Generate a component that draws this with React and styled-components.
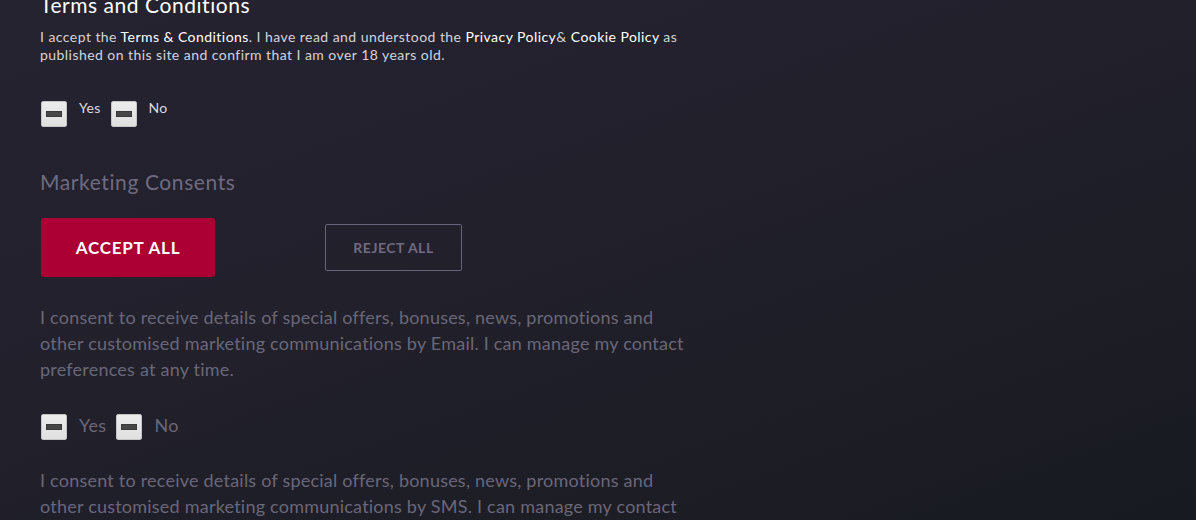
import styled, { createGlobalStyle } from 'styled-components';

const GlobalStyle = createGlobalStyle`
  html, body {
    margin: 0;
    padding: 0;
  }
  body {
    font-family: Lato, 'Open Sans', sans-serif;
    background: #201f2a;
  }
  * {
    box-sizing: border-box;
  }
`;

function CheckBox() {
  return (
    <Box>
      <Bar />
    </Box>
  );
}

function ChoiceRow({ large }) {
  return (
    <Row $large={large}>
      <CheckBox />
      <ChoiceLabel $large={large}>Yes</ChoiceLabel>
      <CheckBox />
      <ChoiceLabel $large={large}>No</ChoiceLabel>
    </Row>
  );
}

export default function App() {
  return (
    <>
      <GlobalStyle />
      <Page>
        <Form>
          <Title>Terms and Conditions</Title>
          <Legal>
            I accept the <strong>Terms &amp; Conditions</strong>. I have read and understood the{' '}
            <strong>Privacy Policy</strong>&amp; <strong>Cookie Policy</strong> as published on this
            site and confirm that I am over 18 years old.
          </Legal>
          <ChoiceRow />

          <SectionTitle>Marketing Consents</SectionTitle>
          <Buttons>
            <AcceptButton>ACCEPT ALL</AcceptButton>
            <RejectButton>REJECT ALL</RejectButton>
          </Buttons>

          <Consent>
            I consent to receive details of special offers, bonuses, news, promotions and other
            customised marketing communications by Email. I can manage my contact preferences at any
            time.
          </Consent>
          <ChoiceRow large />

          <Consent>
            I consent to receive details of special offers, bonuses, news, promotions and other
            customised marketing communications by SMS. I can manage my contact preferences at any
            time.
          </Consent>
        </Form>
      </Page>
    </>
  );
}

const Page = styled.div`
  min-height: 100vh;
  height: 520px;
  overflow: hidden;
  padding: 0 40px;
  background: linear-gradient(160deg, #252330 0%, #21202b 45%, #1d1d26 75%, #171a21 100%);
`;

const Form = styled.div`
  width: 656px;
  display: flex;
  flex-direction: column;
`;

const Title = styled.h2`
  margin: -7px 0 0;
  font-size: 21px;
  line-height: 24px;
  font-weight: 400;
  letter-spacing: 0.55px;
  color: #ffffff;
`;

const Legal = styled.p`
  margin: 11px 0 0;
  font-size: 14px;
  line-height: 18px;
  color: #d4d3da;
  letter-spacing: 0.45px;
  strong {
    font-weight: 400;
    color: #ffffff;
  }
`;

const Row = styled.div`
  display: flex;
  align-items: ${(p) => (p.$large ? 'center' : 'flex-start')};
  margin-top: ${(p) => (p.$large ? '32px' : '37px')};
  padding-left: 1px;
`;

const Box = styled.span`
  width: 26px;
  height: 26px;
  flex: none;
  display: flex;
  align-items: center;
  justify-content: center;
  background: linear-gradient(#ececec, #e0e0e0);
  border: 1px solid #c4c4c4;
  border-radius: 2px;
`;

const Bar = styled.span`
  width: 16px;
  height: 6px;
  background: #474747;
  border: 1px solid #3a3a3a;
`;

const ChoiceLabel = styled.span`
  margin: ${(p) => (p.$large ? '0 10px 4px 12px' : '-1px 10px 0 12px')};
  font-size: ${(p) => (p.$large ? '18px' : '14px')};
  line-height: ${(p) => (p.$large ? '22px' : '16px')};
  letter-spacing: 0.3px;
  color: ${(p) => (p.$large ? '#6a6778' : '#dcdbe2')};
`;

const SectionTitle = styled.h3`
  margin: 43px 0 0;
  font-size: 21px;
  line-height: 24px;
  font-weight: 400;
  letter-spacing: 0.6px;
  color: #6f6b80;
`;

const Buttons = styled.div`
  display: flex;
  align-items: center;
  gap: 110px;
  margin-top: 24px;
  padding-left: 1px;
`;

const AcceptButton = styled.button`
  width: 174px;
  height: 59px;
  border: none;
  border-radius: 3px;
  background: #ac0034;
  color: #ffffff;
  font-family: Lato, sans-serif;
  font-size: 17px;
  font-weight: 700;
  letter-spacing: 0.8px;
  cursor: pointer;
`;

const RejectButton = styled.button`
  width: 137px;
  height: 47px;
  border: 1px solid #66637a;
  border-radius: 2px;
  background: transparent;
  color: #6f6b80;
  font-family: Lato, sans-serif;
  font-size: 14px;
  font-weight: 700;
  letter-spacing: 0.5px;
  cursor: pointer;
`;

const Consent = styled.p`
  margin: 27px 0 0;
  font-size: 18px;
  line-height: 26px;
  letter-spacing: 0.22px;
  color: #6a6778;
`;
